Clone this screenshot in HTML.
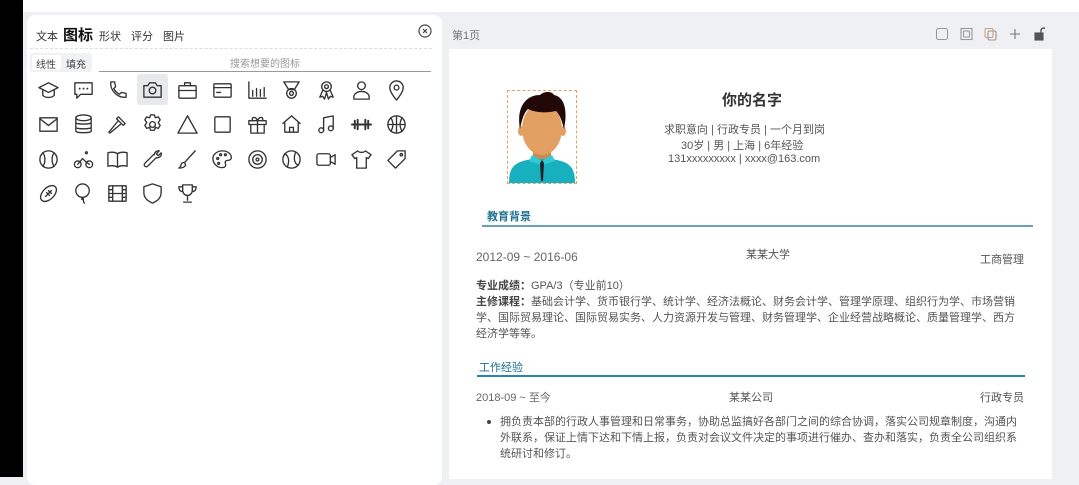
<!DOCTYPE html>
<html><head><meta charset="utf-8"><style>
*{margin:0;padding:0;box-sizing:border-box}
body{width:1079px;height:477px;overflow:hidden;background:#eef0f4;font-family:"Liberation Sans","Noto Sans CJK SC",sans-serif;position:relative;color:#333}
.a{position:absolute;white-space:nowrap}
.ic{position:absolute;width:23px;height:23px}
.ic svg{width:23px;height:23px;fill:none;stroke:#333;stroke-width:1.4;stroke-linecap:round;stroke-linejoin:round}
.t{font-size:11px;color:#555}
.p{font-size:11px;color:#555;line-height:16px}
</style></head><body>
<div class="a" style="left:0;top:0;width:1079px;height:12px;background:#fff"></div>
<div class="a" style="left:0;top:0;width:23px;height:477px;background:#000"></div>
<div class="a" style="left:27px;top:15px;width:415px;height:470px;background:#fff;border-radius:8px"></div>
<div class="a" style="left:36px;top:28px;font-size:11px;color:#333">文本</div>
<div class="a" style="left:63px;top:24px;font-size:15px;font-weight:bold;color:#111">图标</div>
<div class="a" style="left:99px;top:28px;font-size:11px">形状</div>
<div class="a" style="left:131px;top:28px;font-size:11px">评分</div>
<div class="a" style="left:163px;top:28px;font-size:11px">图片</div>
<svg class="a" style="left:418px;top:24px" width="14" height="14" viewBox="0 0 14 14" fill="none" stroke="#444" stroke-width="1.2"><circle cx="7" cy="7" r="6"/><path d="M5 5l4 4M9 5l-4 4"/></svg>
<div class="a" style="left:30px;top:48px;width:402px;border-top:1px dashed #ddd"></div>
<div class="a" style="left:30px;top:53px;width:62px;height:19px;background:#f0f1f3;border-radius:3px"></div>
<div class="a" style="left:32px;top:55px;width:29px;height:15px;background:#fff;border-radius:2px"></div>
<div class="a" style="left:36px;top:56px;font-size:10px;color:#444">线性</div>
<div class="a" style="left:66px;top:56px;font-size:10px;color:#444">填充</div>
<div class="a" style="left:230px;top:55px;font-size:10px;color:#999">搜索想要的图标</div>
<div class="a" style="left:99px;top:71px;width:332px;border-top:1px solid #999"></div>
<div class="a" style="left:137px;top:74px;width:31px;height:31px;background:#e8e9ec;border-radius:3px"></div>

<div class="ic" style="left:37px;top:79px"><svg viewBox="0 0 24 24"><path d="M2 9l10-5 10 5-10 5z"/><path d="M6 11v6c3 3 9 3 12 0v-6"/></svg></div>
<div class="ic" style="left:72px;top:79px"><svg viewBox="0 0 24 24"><path d="M3 4h18v12H9l-4 4v-4H3z"/><path d="M8 10h0M12 10h0M16 10h0" stroke-width="2"/></svg></div>
<div class="ic" style="left:106px;top:79px"><svg viewBox="0 0 24 24"><path d="M5 3l4 0 1 5-2 2c1 2 3 4 6 6l2-2 5 1v4c-9 1-17-7-16-16z"/></svg></div>
<div class="ic" style="left:141px;top:79px"><svg viewBox="0 0 24 24"><path d="M3 7h4l2-3h6l2 3h4v12H3z"/><circle cx="12" cy="12" r="3.5"/></svg></div>
<div class="ic" style="left:176px;top:79px"><svg viewBox="0 0 24 24"><rect x="3" y="7" width="18" height="13" rx="1"/><path d="M9 7V4h6v3M3 12h18"/></svg></div>
<div class="ic" style="left:211px;top:79px"><svg viewBox="0 0 24 24"><rect x="3" y="5" width="18" height="14" rx="1"/><path d="M3 9h18M6 14h4"/></svg></div>
<div class="ic" style="left:246px;top:79px"><svg viewBox="0 0 24 24"><path d="M3 3v17h18M7 12v6M11 10v8M15 11v7M19 9v9"/></svg></div>
<div class="ic" style="left:280px;top:79px"><svg viewBox="0 0 24 24"><path d="M4 3h16l-5 8H9z"/><circle cx="12" cy="15" r="5"/><circle cx="12" cy="15" r="2"/></svg></div>
<div class="ic" style="left:315px;top:79px"><svg viewBox="0 0 24 24"><circle cx="12" cy="8" r="5"/><circle cx="12" cy="8" r="2"/><path d="M8 12l-3 7 3-1 2 3 2-7 2 7 2-3 3 1-3-7"/></svg></div>
<div class="ic" style="left:350px;top:79px"><svg viewBox="0 0 24 24"><circle cx="12" cy="7" r="4"/><path d="M4 21v-2c0-4 4-6 8-6s8 2 8 6v2z"/></svg></div>
<div class="ic" style="left:385px;top:79px"><svg viewBox="0 0 24 24"><path d="M12 22s-7-8-7-13a7 7 0 0114 0c0 5-7 13-7 13z"/><circle cx="12" cy="9" r="2.5"/></svg></div>
<div class="ic" style="left:37px;top:113px"><svg viewBox="0 0 24 24"><rect x="3" y="5" width="18" height="14"/><path d="M3 6l9 7 9-7"/></svg></div>
<div class="ic" style="left:72px;top:113px"><svg viewBox="0 0 24 24"><ellipse cx="12" cy="5" rx="8" ry="3"/><path d="M4 5v14c0 2 16 2 16 0V5M4 10c0 2 16 2 16 0M4 15c0 2 16 2 16 0"/></svg></div>
<div class="ic" style="left:106px;top:113px"><svg viewBox="0 0 24 24"><path d="M13 4l7 7-2 2-7-7zM12 9L3 20l1 1 11-9"/></svg></div>
<div class="ic" style="left:141px;top:113px"><svg viewBox="0 0 24 24"><circle cx="12" cy="12" r="3"/><path d="M10 2h4l1 3 3-1 2 3-2 3 2 3-2 3-3-1-1 3h-4l-1-3-3 1-2-3 2-3-2-3 2-3 3 1z"/></svg></div>
<div class="ic" style="left:176px;top:113px"><svg viewBox="0 0 24 24"><path d="M12 3l10 18H2z"/></svg></div>
<div class="ic" style="left:211px;top:113px"><svg viewBox="0 0 24 24"><rect x="4" y="4" width="16" height="16" rx="1"/></svg></div>
<div class="ic" style="left:246px;top:113px"><svg viewBox="0 0 24 24"><rect x="3" y="8" width="18" height="4"/><path d="M5 12v9h14v-9M12 8v13M12 8c-2-5-7-4-5 0M12 8c2-5 7-4 5 0"/></svg></div>
<div class="ic" style="left:280px;top:113px"><svg viewBox="0 0 24 24"><path d="M3 11l9-8 9 8M5 9v11h14V9M10 20v-5h4v5"/></svg></div>
<div class="ic" style="left:315px;top:113px"><svg viewBox="0 0 24 24"><path d="M9 18V5l10-2v13"/><circle cx="6.5" cy="18" r="2.5"/><circle cx="16.5" cy="16" r="2.5"/></svg></div>
<div class="ic" style="left:350px;top:113px"><svg viewBox="0 0 24 24"><path d="M2 12h20M5 8v8M8 7v10M16 7v10M19 8v8" stroke-width="2"/></svg></div>
<div class="ic" style="left:385px;top:113px"><svg viewBox="0 0 24 24"><circle cx="12" cy="12" r="9"/><path d="M3 12h18M12 3v18M6 5c3 4 3 10 0 14M18 5c-3 4-3 10 0 14"/></svg></div>
<div class="ic" style="left:37px;top:148px"><svg viewBox="0 0 24 24"><circle cx="12" cy="12" r="9"/><path d="M6 5c3 3 3 11 0 14M18 5c-3 3-3 11 0 14"/></svg></div>
<div class="ic" style="left:72px;top:148px"><svg viewBox="0 0 24 24"><circle cx="6" cy="17" r="3.5"/><circle cx="18" cy="17" r="3.5"/><path d="M6 17l5-6 3 3 4 3"/><circle cx="15" cy="5" r="1"/></svg></div>
<div class="ic" style="left:106px;top:148px"><svg viewBox="0 0 24 24"><path d="M2 5c4-1 7-1 10 1 3-2 6-2 10-1v14c-4-1-7-1-10 1-3-2-6-2-10-1zM12 6v14"/></svg></div>
<div class="ic" style="left:141px;top:148px"><svg viewBox="0 0 24 24"><path d="M14 7a4 4 0 015-4l-3 3 2 2 3-3a4 4 0 01-5 5L7 19a2 2 0 01-3-3l9-9z"/></svg></div>
<div class="ic" style="left:176px;top:148px"><svg viewBox="0 0 24 24"><path d="M20 3L10 14l-1 1M9 15c-3 0-4 2-4 4l-2 2c3 0 6-1 7-3z"/></svg></div>
<div class="ic" style="left:211px;top:148px"><svg viewBox="0 0 24 24"><path d="M12 3c6 0 10 4 9 8-1 3-5 1-6 3s2 4-1 6c-6 2-12-3-12-9 0-4 4-8 10-8z"/><circle cx="7" cy="11" r="1"/><circle cx="10" cy="7" r="1"/><circle cx="15" cy="7" r="1"/><circle cx="8" cy="16" r="1"/></svg></div>
<div class="ic" style="left:246px;top:148px"><svg viewBox="0 0 24 24"><circle cx="12" cy="12" r="9"/><circle cx="12" cy="12" r="5"/><circle cx="12" cy="12" r="1.5"/></svg></div>
<div class="ic" style="left:280px;top:148px"><svg viewBox="0 0 24 24"><circle cx="12" cy="12" r="9"/><path d="M5 6c4 2 5 7 3 13M19 18c-4-2-5-7-3-13"/></svg></div>
<div class="ic" style="left:315px;top:148px"><svg viewBox="0 0 24 24"><rect x="2" y="6" width="14" height="12" rx="2"/><path d="M16 10l5-3v10l-5-3"/></svg></div>
<div class="ic" style="left:350px;top:148px"><svg viewBox="0 0 24 24"><path d="M8 3l-6 4 3 4 2-1v11h10V10l2 1 3-4-6-4c-1 2-7 2-8 0z"/></svg></div>
<div class="ic" style="left:385px;top:148px"><svg viewBox="0 0 24 24"><path d="M13 3h8v8L11 21l-8-8z"/><circle cx="17" cy="7" r="1.2"/></svg></div>
<div class="ic" style="left:37px;top:182px"><svg viewBox="0 0 24 24"><ellipse cx="12" cy="12" rx="10" ry="6" transform="rotate(-45 12 12)"/><path d="M9 15l6-6M10 11l3 3M12 9l3 3"/></svg></div>
<div class="ic" style="left:72px;top:182px"><svg viewBox="0 0 24 24"><ellipse cx="11" cy="9" rx="7" ry="7"/><path d="M11 16l1 2-2 0zM11 18c2 1 0 3 2 4"/></svg></div>
<div class="ic" style="left:106px;top:182px"><svg viewBox="0 0 24 24"><rect x="3" y="4" width="18" height="16"/><path d="M7 4v16M17 4v16M3 12h18M3 8h4M3 16h4M17 8h4M17 16h4"/></svg></div>
<div class="ic" style="left:141px;top:182px"><svg viewBox="0 0 24 24"><path d="M12 2l9 3v6c0 6-4 9-9 11-5-2-9-5-9-11V5z"/></svg></div>
<div class="ic" style="left:176px;top:182px"><svg viewBox="0 0 24 24"><path d="M7 3h10v6a5 5 0 01-10 0zM7 5H3c0 4 2 5 4 5M17 5h4c0 4-2 5-4 5M12 14v5M8 21h8"/></svg></div>

<div class="a" style="left:452px;top:27px;font-size:11px;color:#777">第1页</div>
<svg class="a" style="left:935px;top:27px" width="110" height="14" viewBox="0 0 110 14" fill="none" stroke="#999" stroke-width="1.1"><rect x="1.5" y="1.5" width="11" height="11" rx="2"/><rect x="26" y="1.5" width="11" height="11"/><rect x="28.5" y="4" width="6" height="6" rx="1"/><rect x="50" y="1.5" width="8" height="9" rx="1.5" stroke="#d4a070"/><rect x="53" y="4" width="8" height="9" rx="1.5"/><path d="M80 2v10M75 7h10" stroke="#777"/><rect x="100" y="6" width="8" height="7" fill="#555" stroke="#555"/><path d="M106 6V3.5a2.5 2.5 0 015 0" stroke="#555" stroke-width="1.4"/></svg>
<div class="a" style="left:449px;top:49px;width:603px;height:430px;background:#fff"></div>
<div class="a" style="left:507px;top:90px;width:70px;height:94px;border:1px dashed #e0a070"></div>
<svg class="a" style="left:508px;top:91px" width="68" height="92" viewBox="0 0 68 92"><path d="M1 92c0-14 4-20 18-23l15-3 15 3c14 3 18 9 18 23z" fill="#17b0bf"/><rect x="25" y="50" width="18" height="18" fill="#c98a5a"/><path d="M24 64l10 6 10-6 3 6-13 4-13-4z" fill="#2fcbd6"/><ellipse cx="34" cy="38" rx="20" ry="26" fill="#e2a063"/><ellipse cx="13" cy="40" rx="3" ry="5" fill="#e2a063"/><ellipse cx="55" cy="40" rx="3" ry="5" fill="#e2a063"/><path d="M12 38c-4-22 6-34 20-34 4-4 12-4 14 0 10 2 14 14 10 34-2-8-4-14-8-18-9 2-20 2-28-2-4 4-6 10-8 20z" fill="#230808"/><path d="M32 72l2-3 2 3-1 18h-2z" fill="#222"/></svg>
<div class="a" style="left:722px;top:89px;font-size:15px;font-weight:bold;color:#333">你的名字</div>
<div class="a t" style="left:664px;top:121px">求职意向 | 行政专员 | 一个月到岗</div>
<div class="a t" style="left:681px;top:137px">30岁 | 男 | 上海 | 6年经验</div>
<div class="a t" style="left:668px;top:153px">131xxxxxxxxx | xxxx@163.com</div>

<div class="a" style="left:487px;top:208px;font-size:11px;font-weight:bold;color:#1d7090">教育背景</div>
<div class="a" style="left:482px;top:225px;width:551px;height:2px;background:#6aa3b8"></div>
<div class="a" style="left:476px;top:250px;font-size:12px;color:#666">2012-09 ~ 2016-06</div>
<div class="a" style="left:746px;top:246px;font-size:11px;color:#555">某某大学</div>
<div class="a" style="left:980px;top:251px;font-size:11px;color:#555">工商管理</div>
<div class="a p" style="left:476px;top:278px;white-space:normal;width:544px"><b style="color:#444">专业成绩：</b>GPA/3（专业前10）<br><b style="color:#444">主修课程：</b>基础会计学、货币银行学、统计学、经济法概论、财务会计学、管理学原理、组织行为学、市场营销学、国际贸易理论、国际贸易实务、人力资源开发与管理、财务管理学、企业经营战略概论、质量管理学、西方经济学等等。</div>
<div class="a" style="left:479px;top:359px;font-size:11px;color:#1d7090">工作经验</div>
<div class="a" style="left:477px;top:375px;width:548px;height:2px;background:#2a86a8"></div>
<div class="a" style="left:476px;top:389px;font-size:11px;color:#666">2018-09 ~ 至今</div>
<div class="a" style="left:729px;top:389px;font-size:11px;color:#555">某某公司</div>
<div class="a" style="left:980px;top:389px;font-size:11px;color:#555">行政专员</div>
<div class="a" style="left:487px;top:420px;width:4px;height:4px;border-radius:50%;background:#444"></div>
<div class="a p" style="left:500px;top:414px;white-space:normal;width:523px">拥负责本部的行政人事管理和日常事务，协助总监搞好各部门之间的综合协调，落实公司规章制度，沟通内外联系，保证上情下达和下情上报，负责对会议文件决定的事项进行催办、查办和落实，负责全公司组织系统研讨和修订。</div>
</body></html>
